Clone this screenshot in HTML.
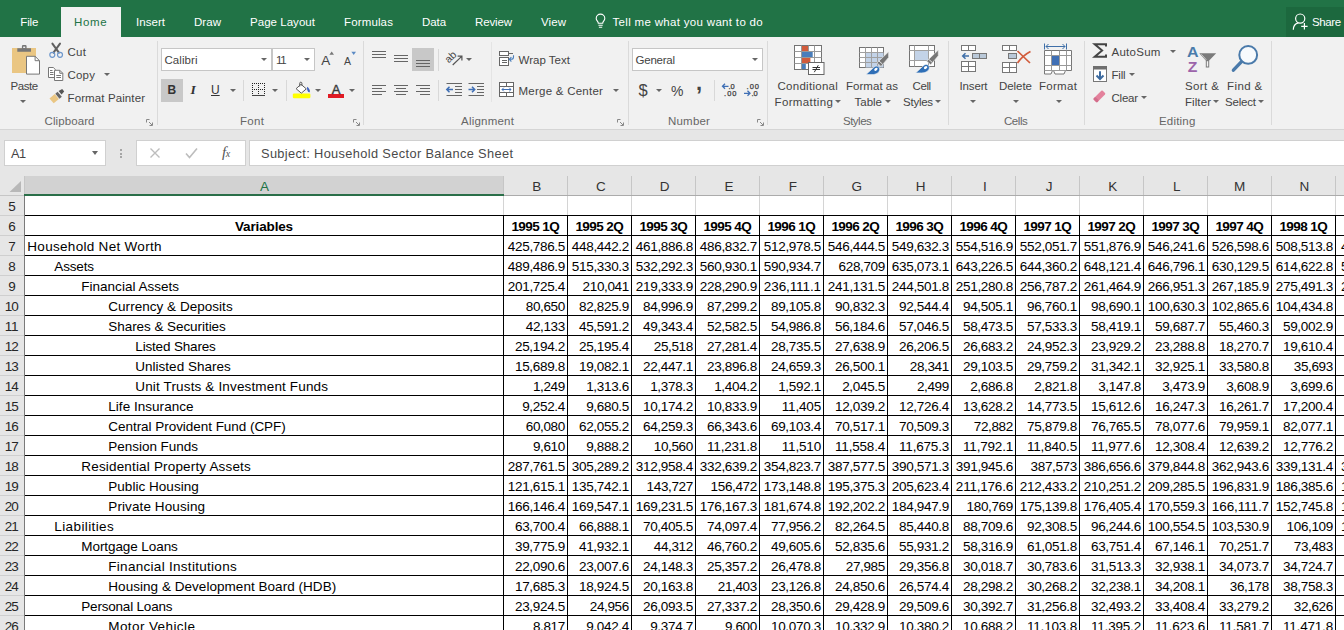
<!DOCTYPE html><html><head><meta charset="utf-8"><title>Household Sector Balance Sheet - Excel</title><style>
html,body{margin:0;padding:0;}
body{width:1344px;height:630px;overflow:hidden;background:#e6e6e6;position:relative;font-family:"Liberation Sans",sans-serif;}
.a{position:absolute;}
.t{position:absolute;white-space:pre;display:block;}
#top{left:0;top:0;width:1344px;height:37px;background:#217346;}
#hometab{left:61px;top:7px;width:60px;height:31px;background:#f1f1f1;}
#share{left:1286px;top:7px;width:58px;height:30px;background:#1c683e;}
#ribbon{left:0;top:37px;width:1344px;height:92px;background:#f1f1f1;border-bottom:1px solid #d5d5d5;}
.vs{position:absolute;width:1px;background:#dadada;}
.box{position:absolute;background:#fff;border:1px solid #c6c6c6;box-sizing:border-box;}
.sel{position:absolute;background:#c8c8c8;}
svg{position:absolute;overflow:visible;}
.dd{position:absolute;width:0;height:0;border-left:3px solid transparent;border-right:3px solid transparent;border-top:3.5px solid #666;}

</style></head><body>
<div class="a" id="top"></div><div class="a" id="hometab"></div><div class="a" id="share"></div><div class="a" id="ribbon"></div>
<div class="vs" style="left:157px;top:41px;height:84px"></div>
<div class="vs" style="left:363px;top:41px;height:84px"></div>
<div class="vs" style="left:628px;top:41px;height:84px"></div>
<div class="vs" style="left:767px;top:41px;height:84px"></div>
<div class="vs" style="left:948px;top:41px;height:84px"></div>
<div class="vs" style="left:1084px;top:41px;height:84px"></div>
<div class="vs" style="left:1271px;top:41px;height:84px"></div>
<div class="vs" style="left:491px;top:42px;height:60px;background:#e4e4e4"></div>
<div class="vs" style="left:438px;top:49px;height:22px;background:#d8d8d8"></div>
<div class="vs" style="left:438px;top:80px;height:21px;background:#d8d8d8"></div>
<div class="vs" style="left:243px;top:80px;height:21px;background:#d8d8d8"></div>
<div class="vs" style="left:286px;top:80px;height:21px;background:#d8d8d8"></div>
<div class="vs" style="left:714px;top:80px;height:21px;background:#d8d8d8"></div>
<div class="box" style="left:161px;top:48px;width:111px;height:23px"></div>
<div class="box" style="left:272px;top:48px;width:43px;height:23px"></div>
<div class="box" style="left:632px;top:48px;width:131px;height:23px"></div>
<div class="sel" style="left:161px;top:79px;width:22px;height:23px"></div>
<div class="sel" style="left:412px;top:48px;width:22px;height:23px"></div>
<svg style="left:145.5px;top:118.5px" width="7" height="7" viewBox="0 0 7 7"><path d="M0.5 3.5V0.5H3.5M3 3L6 6M6.500 3.500V6.500H3.500" fill="none" stroke="#888" stroke-width="1"/></svg>
<svg style="left:352.5px;top:118.5px" width="7" height="7" viewBox="0 0 7 7"><path d="M0.5 3.5V0.5H3.5M3 3L6 6M6.500 3.500V6.500H3.500" fill="none" stroke="#888" stroke-width="1"/></svg>
<svg style="left:616.5px;top:118.5px" width="7" height="7" viewBox="0 0 7 7"><path d="M0.5 3.5V0.5H3.5M3 3L6 6M6.500 3.500V6.500H3.500" fill="none" stroke="#888" stroke-width="1"/></svg>
<svg style="left:756.5px;top:118.5px" width="7" height="7" viewBox="0 0 7 7"><path d="M0.5 3.5V0.5H3.5M3 3L6 6M6.500 3.500V6.500H3.500" fill="none" stroke="#888" stroke-width="1"/></svg>
<div class="box" style="left:4px;top:140px;width:102px;height:26px;border-color:#d0d0d0"></div>
<div class="box" style="left:136px;top:140px;width:110px;height:26px;border-color:#d0d0d0"></div>
<div class="box" style="left:249px;top:140px;width:1100px;height:26px;border-color:#d0d0d0"></div>
<div class="dd" style="left:20px;top:99.5px"></div>
<div class="dd" style="left:104px;top:72.5px"></div>
<div class="dd" style="left:261px;top:58.0px"></div>
<div class="dd" style="left:304px;top:58.0px"></div>
<div class="dd" style="left:229.5px;top:89.0px"></div>
<div class="dd" style="left:272px;top:89.0px"></div>
<div class="dd" style="left:315px;top:89.0px"></div>
<div class="dd" style="left:349px;top:89.0px"></div>
<div class="dd" style="left:465.5px;top:58.0px"></div>
<div class="dd" style="left:612.5px;top:89.0px"></div>
<div class="dd" style="left:752px;top:58.0px"></div>
<div class="dd" style="left:656px;top:89.0px"></div>
<div class="dd" style="left:835px;top:100.0px"></div>
<div class="dd" style="left:884.5px;top:100.0px"></div>
<div class="dd" style="left:935px;top:100.0px"></div>
<div class="dd" style="left:970px;top:100.0px"></div>
<div class="dd" style="left:1012.5px;top:100.0px"></div>
<div class="dd" style="left:1055.5px;top:100.0px"></div>
<div class="dd" style="left:1170px;top:50.0px"></div>
<div class="dd" style="left:1129px;top:73.0px"></div>
<div class="dd" style="left:1140.5px;top:96.0px"></div>
<div class="dd" style="left:1213px;top:100.0px"></div>
<div class="dd" style="left:1258px;top:100.0px"></div>
<div class="dd" style="left:92px;top:151px;border-left-width:3.5px;border-right-width:3.5px;border-top-width:4px"></div>
<div class="a" style="left:120px;top:149px;width:2px;height:2px;background:#a6a6a6"></div>
<div class="a" style="left:120px;top:152.5px;width:2px;height:2px;background:#a6a6a6"></div>
<div class="a" style="left:120px;top:156px;width:2px;height:2px;background:#a6a6a6"></div>
<svg style="left:149px;top:147px" width="12" height="12" viewBox="0 0 12 12"><path d="M1.5 1.5L10.5 10.5M10.5 1.5L1.5 10.5" stroke="#bdbdbd" stroke-width="1.4" fill="none"/></svg>
<svg style="left:185px;top:147px" width="13" height="12" viewBox="0 0 13 12"><path d="M1 6.5L4.5 10.5L12 1.5" stroke="#bdbdbd" stroke-width="1.6" fill="none"/></svg>
<span class="t" style="left:222px;top:145px;font-family:'Liberation Serif',serif;font-style:italic;font-size:15px;line-height:15px;color:#555;letter-spacing:-0.5px">f<span style="font-size:10px">x</span></span>
<div class="a" style="left:0;top:196px;width:1344px;height:434px;background:#fff"></div>
<div class="a" style="left:0;top:176px;width:1344px;height:20px;background:#e6e6e6"></div>
<div class="a" style="left:0;top:196px;width:24px;height:434px;background:#e6e6e6"></div>
<div class="a" style="left:25px;top:176px;width:479px;height:18px;background:#d2d2d2"></div>
<svg style="left:0;top:0" width="1344" height="630" viewBox="0 0 1344 630" shape-rendering="crispEdges"><path d="M21 181V192H9.5Z" fill="#b8b8b8" shape-rendering="auto"/><path d="M504 195.5H1344" stroke="#ababab" stroke-width="1"/><path d="M0 195.5H24" stroke="#c6c6c6" stroke-width="1"/><path d="M503.5 176V195M567.5 176V195M631.5 176V195M695.5 176V195M759.5 176V195M823.5 176V195M887.5 176V195M951.5 176V195M1015.5 176V195M1079.5 176V195M1143.5 176V195M1207.5 176V195M1271.5 176V195M1335.5 176V195M1399.5 176V195M24.5 176V195" stroke="#c6c6c6" stroke-width="1"/><path d="M0 215.5H24M0 235.5H24M0 255.5H24M0 275.5H24M0 295.5H24M0 315.5H24M0 335.5H24M0 355.5H24M0 375.5H24M0 395.5H24M0 415.5H24M0 435.5H24M0 455.5H24M0 475.5H24M0 495.5H24M0 515.5H24M0 535.5H24M0 555.5H24M0 575.5H24M0 595.5H24M0 615.5H24" stroke="#cfcfcf" stroke-width="1"/><path d="M503.5 196V215M567.5 196V215M631.5 196V215M695.5 196V215M759.5 196V215M823.5 196V215M887.5 196V215M951.5 196V215M1015.5 196V215M1079.5 196V215M1143.5 196V215M1207.5 196V215M1271.5 196V215M1335.5 196V215M1399.5 196V215" stroke="#d4d4d4" stroke-width="1"/><path d="M24 195H504" stroke="#2a6f49" stroke-width="2"/><path d="M25 215.5H1344M25 235.5H1344M25 255.5H1344M25 275.5H1344M25 295.5H1344M25 315.5H1344M25 335.5H1344M25 355.5H1344M25 375.5H1344M25 395.5H1344M25 415.5H1344M25 435.5H1344M25 455.5H1344M25 475.5H1344M25 495.5H1344M25 515.5H1344M25 535.5H1344M25 555.5H1344M25 575.5H1344M25 595.5H1344M25 615.5H1344M503.5 215V630M567.5 215V630M631.5 215V630M695.5 215V630M759.5 215V630M823.5 215V630M887.5 215V630M951.5 215V630M1015.5 215V630M1079.5 215V630M1143.5 215V630M1207.5 215V630M1271.5 215V630M1335.5 215V630" stroke="#000" stroke-width="1"/><path d="M24.5 196V630" stroke="#7a7a7a" stroke-width="1"/></svg>
<svg style="left:0;top:0" width="1344" height="176" viewBox="0 0 1344 176" fill="none">
<!-- bulb -->
<g stroke="#fff" stroke-width="1.1" fill="none">
<path d="M598.3 23.2C598.3 21.6 596.2 20.6 596.2 18.4a4.3 4.3 0 0 1 8.6 0c0 2.2-2.1 3.2-2.1 4.8Z"/>
<path d="M598.4 25.2h4.3M598.9 27.3h3.3"/>
</g>
<!-- share icon -->
<g stroke="#fff" stroke-width="1.2" fill="none">
<circle cx="1300.2" cy="18.6" r="4.6"/>
<path d="M1293.3 29.8c0-4 2.2-6.3 5-7"/>
<path d="M1301.2 26.3h6.4M1304.4 23.1v6.4"/>
</g>
<!-- PASTE -->
<g>
<rect x="12" y="48" width="24" height="25" fill="#eac683"/>
<path d="M17.3 51.7V48.2h4.6V46.3a1.2 1.2 0 0 1 1.2-1.2h2.3a1.2 1.2 0 0 1 1.2 1.2v1.9H31v3.5Z" fill="#777"/>
<rect x="23.2" y="46.6" width="2" height="1.4" fill="#f1f1f1"/>
<path d="M26.5 56.3h8.6l4.4 4.4v13.4H26.5Z" fill="#fff" stroke="#777" stroke-width="1"/>
<path d="M35.1 56.3v4.4h4.4" stroke="#777" stroke-width="1" fill="none"/>
</g>
<!-- CUT -->
<g>
<path d="M52.4 43.6L58.9 52.6M60 43.6L53.5 52.6" stroke="#606060" stroke-width="2" stroke-linecap="round"/>
<circle cx="52.3" cy="54.8" r="2.5" stroke="#6d97cc" stroke-width="1.2"/>
<circle cx="60" cy="54.8" r="2.5" stroke="#6d97cc" stroke-width="1.2"/>
</g>
<!-- COPY -->
<g stroke="#777" stroke-width="1" fill="#fff">
<path d="M48.5 67.5h4.8l2.2 2.2v7.8h-7Z"/>
<path d="M50 70.5h2.5M50 72.5h3.5M50 74.5h3.5" />
<path d="M54.5 70.3h5.3l3 3v7.2h-8.3Z"/>
<path d="M59.8 70.3v3h3" fill="none"/>
<path d="M56.3 75.5h4.7M56.3 77.5h4.7" />
</g>
<!-- FORMAT PAINTER -->
<g>
<path d="M49.5 98.5l5.2-4.4 4.2 5-5.2 4.2Z" fill="#eac683"/>
<path d="M55.3 93.8l2.3-2 4.2 5-2.3 1.9Z" fill="#666"/>
<path d="M58.6 91l3.6-2 2 2.4-2.7 3.1Z" fill="#555"/>
</g>
<!-- grow/shrink font triangles -->
<path d="M329.4 54.8l2.3-3.2 2.3 3.2Z" fill="#777"/>
<path d="M351.4 51.7h4.6l-2.3 3.2Z" fill="#5b8ac4"/>
<!-- BORDERS icon -->
<g stroke="#222" stroke-width="1" stroke-dasharray="1 1" shape-rendering="crispEdges">
<path d="M252 83.500h13M252 89.500h13M252.500 83v12M258.500 83v12M264.500 83v12"/>
</g>
<path d="M252 95.500h13" stroke="#444" stroke-width="1" shape-rendering="crispEdges"/>
<!-- FILL bucket -->
<g>
<rect x="292.800" y="93.600" width="17.600" height="4.700" fill="#ffff00" rx="1.200"/>
<path d="M301 84.300l5.300 4.600-5 4.300-5.200-4.500Z" fill="#fff" stroke="#5a5a5a" stroke-width="1"/>
<path d="M299.700 86.500v-3.200a1.100 1.100 0 0 1 2.200 0v2.400" stroke="#5a5a5a" stroke-width="1"/>
<path d="M307 86.800c2 1.300 3.300 3.400 2.800 5.500-1.800.400-3-1.800-2.800-5.500Z" fill="#3b5fc0"/>
</g>
<!-- FONT COLOR bar -->
<rect x="328" y="94" width="16" height="4" fill="#e01b24"/>
<!-- ALIGN icons -->
<g stroke="#666" stroke-width="1">
<path d="M372 51.500h14M372 54.500h14M372 57.500h14"/>
<path d="M394 55.500h14M394 58.500h14M394 61.500h14"/>
<path d="M416 60.500h14M416 63.500h14M416 66.500h14"/>
<path d="M372 85.500h14M372 88.500h10M372 91.500h14M372 94.500h10"/>
<path d="M394 85.500h14M396 88.500h10M394 91.500h14M396 94.500h10"/>
<path d="M416 85.500h14M420 88.500h10M416 91.500h14M420 94.500h10"/>
</g>
<!-- ORIENTATION -->
<g>
<path d="M452.700 65l9-8.600M457.600 56.200h4.300v4.300" stroke="#555" stroke-width="1.200"/>
<text x="0" y="0" transform="translate(448.800 63.500) rotate(-44)" font-family="Liberation Sans, sans-serif" font-size="10.500" fill="#444">ab</text>
</g>
<!-- INDENT icons -->
<g stroke="#666" stroke-width="1">
<path d="M446.500 83.500h15.500M455 86.500h7M455 89.500h7M455 92.500h7M446.500 95.500h15.500"/>
<path d="M468.500 83.500h15.500M477 86.500h7M477 89.500h7M477 92.500h7M468.500 95.500h15.500"/>
</g>
<g stroke="#3f6fb5" stroke-width="1.500">
<path d="M453 89.500h-6M449.500 86.800l-2.700 2.700 2.700 2.700"/>
<path d="M468.500 89.500h6M472 86.800l2.700 2.700-2.700 2.700"/>
</g>
<!-- WRAP TEXT -->
<g stroke="#666" stroke-width="1" shape-rendering="crispEdges">
<rect x="499.500" y="51.500" width="9" height="4" fill="#fff"/>
<path d="M508.500 53.500h4"/>
<rect x="499.500" y="57.500" width="9" height="8" fill="#fff"/>
<path d="M501.500 60.500h5M501.500 62.500h5"/>
</g>
<path d="M513.500 55.200v1.800c0 1.600-1 2.300-2.400 2.300h-1.800M511.400 57.100l-2.200 2.200 2.200 2.200" stroke="#4a7ebb" stroke-width="1.100"/>
<!-- MERGE -->
<g stroke="#666" stroke-width="1">
<rect x="499.500" y="82.500" width="14" height="14" fill="#fff"/>
<path d="M499.500 86.500h14M499.500 92.500h14M506.500 82.500v4M506.500 92.500v4"/>
</g>
<path d="M502 89.500h9M503.800 87.700l-1.800 1.800 1.800 1.800M509.200 87.700l1.800 1.800-1.800 1.800" stroke="#3f6fb5" stroke-width="1"/>
<!-- DECIMALS -->
<g font-family="Liberation Sans, sans-serif" font-size="7.500" fill="#3a3a3a" stroke="#3a3a3a" stroke-width="0.250">
<text x="728.500" y="88.600">.0</text>
<text x="724" y="95.600" textLength="12.500">.00</text>
<text x="746.500" y="88.600" textLength="12.500">.00</text>
<text x="751.500" y="95.600">.0</text>
</g>
<g stroke="#3f6fb5" stroke-width="1.300">
<path d="M728.500 86.300h-6M725 83.800l-2.500 2.500 2.500 2.500"/>
<path d="M744 93.300h6M747.500 90.800l2.500 2.500-2.500 2.500"/>
</g>
</svg>
<svg style="left:0;top:0" width="1344" height="176" viewBox="0 0 1344 176" fill="none">
<!-- CONDITIONAL FORMATTING -->
<g>
<rect x="794.500" y="45.500" width="27" height="24" fill="#fff" stroke="#747474"/>
<path d="M794.500 51.500h27M794.500 57.500h27M794.500 63.500h27M801.500 45.500v24M808.500 45.500v24M814.500 45.500v24" stroke="#999" stroke-width="1"/>
<rect x="802" y="46" width="6" height="5" fill="#d25c3c"/>
<rect x="802" y="52" width="10.700" height="5" fill="#4a7ebb"/>
<rect x="802" y="58" width="8.400" height="5" fill="#d25c3c"/>
<rect x="802" y="64" width="3.800" height="5" fill="#4a7ebb"/>
<rect x="808.500" y="62.500" width="15.500" height="12" fill="#fff" stroke="#666"/>
<path d="M812.500 67.500h7.500M812.500 69.500h7.500M818.300 65.200l-4 7" stroke="#333" stroke-width="1"/>
</g>
<!-- FORMAT AS TABLE -->
<g>
<rect x="859.500" y="47.500" width="24" height="20" fill="#fff" stroke="#747474"/>
<rect x="866" y="53" width="17.500" height="14.500" fill="#c3d3e8"/>
<path d="M859.500 52.500h24M859.500 57.500h24M859.500 62.500h24M865.500 47.500v20M871.500 47.500v20M877.500 47.500v20" stroke="#a0a0a0" stroke-width="1"/>
<g transform="translate(0 0)"><path d="M888.600 51.800v5.600l-7.600 9-4-3.500Z" fill="#767676" stroke="#f1f1f1" stroke-width="0.600"/>
<path d="M879 61l3.400 3" stroke="#f1f1f1" stroke-width="0.900"/>
<path d="M866 74.600l8.300-7.700c2-1.700 5.300-.500 5.300 2.400 0 3.300-3.600 5.300-7.600 5.300Z" fill="#2f6fb7" stroke="#f1f1f1" stroke-width="0.600"/>
<ellipse cx="875.900" cy="69.300" rx="1.900" ry="1.300" transform="rotate(-40 875.900 69.300)" fill="#fff"/></g>
</g>
<!-- CELL STYLES -->
<g>
<rect x="909.500" y="45.500" width="25" height="21" fill="#fff" stroke="#747474"/>
<path d="M909.500 50.500h25M909.500 60.500h25M914.500 45.500v21M928.500 45.500v21" stroke="#a0a0a0" stroke-width="1"/>
<rect x="915" y="51" width="13" height="9" fill="#c3d3e8"/>
<g transform="translate(49.700 -1.700)"><path d="M888.600 51.800v5.600l-7.600 9-4-3.500Z" fill="#767676" stroke="#f1f1f1" stroke-width="0.600"/>
<path d="M879 61l3.400 3" stroke="#f1f1f1" stroke-width="0.900"/>
<path d="M866 74.600l8.300-7.700c2-1.700 5.300-.500 5.300 2.400 0 3.300-3.600 5.300-7.600 5.300Z" fill="#2f6fb7" stroke="#f1f1f1" stroke-width="0.600"/>
<ellipse cx="875.900" cy="69.300" rx="1.900" ry="1.300" transform="rotate(-40 875.900 69.300)" fill="#fff"/></g>
</g>
<!-- INSERT -->
<g stroke="#777" stroke-width="1">
<rect x="961.500" y="45.500" width="14" height="5" fill="#fff"/><path d="M968.500 45.500v5"/>
<rect x="972.500" y="53.500" width="14" height="5" fill="#b9c8d8"/><path d="M979.500 53.500v5"/>
<rect x="961.500" y="61.500" width="14" height="10" fill="#fff"/><path d="M968.500 61.500v10M961.500 66.500h14"/>
</g>
<path d="M969 56h-6.500M965.500 53.300l-2.800 2.700 2.800 2.700" stroke="#3f6fa8" stroke-width="1.500"/>
<!-- DELETE -->
<g stroke="#777" stroke-width="1">
<rect x="1002.500" y="45.500" width="14" height="5" fill="#fff"/><path d="M1009.500 45.500v5"/>
<rect x="1008.500" y="53.500" width="8" height="5" fill="#b9c8d8"/>
<rect x="1002.500" y="62.500" width="14" height="10" fill="#fff"/><path d="M1009.500 62.500v10M1002.500 67.500h14"/>
</g>
<path d="M1017.500 51l12.500 12M1030.500 51.500c-5 2.500-9.500 6.500-13 11.500" stroke="#d25c3c" stroke-width="1.700"/>
<!-- FORMAT -->
<g>
<path d="M1044.500 43.500v6M1066.500 43.500v6M1046 46.500h19M1048.500 44l-2.500 2.500 2.500 2.500M1062.500 44l2.500 2.500-2.500 2.500" stroke="#3f6fa8" stroke-width="1"/>
<path d="M1044.500 50.500h27v20h-6l-1.500 3.500h-9l-1.500-3.500h-1l-1.500 3.500h-6.500Z" fill="#fff" stroke="#777"/>
<path d="M1044.500 55.500h27M1044.500 65.500h27M1044.500 70.500h21M1051.500 50.500v20M1059.500 50.500v20M1066.500 50.500v20" stroke="#999" stroke-width="1"/>
<rect x="1052" y="56" width="7" height="9" fill="#3f6fb5"/>
</g>
<!-- SIGMA -->
<path d="M1106 46.400v-2.200h-11.300l7.400 6.300-7.400 6.300H1106V54.600" stroke="#444" stroke-width="2" fill="none" stroke-linejoin="miter"/>
<!-- FILL -->
<g>
<rect x="1093.500" y="66.500" width="13" height="15" fill="#fff" stroke="#777"/>
<rect x="1093" y="66" width="14" height="3.500" fill="#6e6e6e"/>
<path d="M1100 71.300v7.500M1096.500 75.500l3.500 3.500 3.500-3.500" stroke="#3c6a9f" stroke-width="2" fill="none"/>
</g>
<!-- ERASER -->
<g transform="translate(1099.400 96.400) rotate(-45)"><rect x="-6.300" y="-2.600" width="12.600" height="5.200" rx="1" fill="#e3819c"/><rect x="-6.300" y="-2.600" width="3" height="5.200" rx="1" fill="#d36d8b"/></g>
<!-- SORT & FILTER -->
<g font-family="Liberation Sans, sans-serif" font-weight="700">
<text x="1186.900" y="57.300" font-size="15.500" fill="#4a7cab" textLength="11.600" lengthAdjust="spacingAndGlyphs">A</text>
<text x="1187.700" y="71.500" font-size="15" fill="#9c64aa" textLength="9.600" lengthAdjust="spacingAndGlyphs">Z</text>
</g>
<path d="M1199.300 53.200h16.900l-7 7.200v7.100h-3.400v-7.100Z" fill="#7b7b7b"/>
<path d="M1206.800 61.200v5.300h1.400v-5.300Z" fill="#f4f4f4"/>
<path d="M1201.300 54.300l5 5.500" stroke="#e0e0e0" stroke-width="0.800"/>
<!-- FIND -->
<g>
<circle cx="1248.200" cy="54.900" r="8.900" fill="#f7fafd" stroke="#4a7aaa" stroke-width="2"/>
<path d="M1241.300 61.900l-7.900 8.300" stroke="#4a7aaa" stroke-width="3.400" stroke-linecap="round"/>
</g>
</svg>

<div id="txt">
<span class="t" style="left:20.30px;top:17.27px;font-size:11.5px;line-height:11.5px;color:#fff;letter-spacing:-0.15px;">File</span>
<span class="t" style="left:74.00px;top:17.27px;font-size:11.5px;line-height:11.5px;color:#217346;letter-spacing:0.66px;">Home</span>
<span class="t" style="left:136.00px;top:17.27px;font-size:11.5px;line-height:11.5px;color:#fff;letter-spacing:0.04px;">Insert</span>
<span class="t" style="left:194.00px;top:17.27px;font-size:11.5px;line-height:11.5px;color:#fff;letter-spacing:0.04px;">Draw</span>
<span class="t" style="left:250.00px;top:17.27px;font-size:11.5px;line-height:11.5px;color:#fff;letter-spacing:0.04px;">Page Layout</span>
<span class="t" style="left:344.00px;top:17.27px;font-size:11.5px;line-height:11.5px;color:#fff;letter-spacing:0.14px;">Formulas</span>
<span class="t" style="left:422.00px;top:17.27px;font-size:11.5px;line-height:11.5px;color:#fff;letter-spacing:-0.08px;">Data</span>
<span class="t" style="left:475.00px;top:17.27px;font-size:11.5px;line-height:11.5px;color:#fff;letter-spacing:-0.13px;">Review</span>
<span class="t" style="left:541.00px;top:17.27px;font-size:11.5px;line-height:11.5px;color:#fff;letter-spacing:0.08px;">View</span>
<span class="t" style="left:612.50px;top:17.27px;font-size:11.5px;line-height:11.5px;color:#fff;letter-spacing:0.32px;">Tell me what you want to do</span>
<span class="t" style="left:1312.00px;top:17.27px;font-size:11.5px;line-height:11.5px;color:#fff;letter-spacing:-0.38px;">Share</span>
<span class="t" style="left:10.50px;top:81.27px;font-size:11.5px;line-height:11.5px;color:#444;letter-spacing:-0.43px;">Paste</span>
<span class="t" style="left:67.50px;top:46.77px;font-size:11.5px;line-height:11.5px;color:#444;letter-spacing:0.24px;">Cut</span>
<span class="t" style="left:67.50px;top:69.77px;font-size:11.5px;line-height:11.5px;color:#444;letter-spacing:0.18px;">Copy</span>
<span class="t" style="left:67.50px;top:92.77px;font-size:11.5px;line-height:11.5px;color:#444;letter-spacing:0.11px;">Format Painter</span>
<span class="t" style="left:44.50px;top:116.27px;font-size:11.5px;line-height:11.5px;color:#666;letter-spacing:0.09px;">Clipboard</span>
<span class="t" style="left:164.50px;top:55.27px;font-size:11.5px;line-height:11.5px;color:#444;letter-spacing:0.06px;">Calibri</span>
<span class="t" style="left:276.00px;top:55.27px;font-size:11.5px;line-height:11.5px;color:#444;letter-spacing:-1.20px;">11</span>
<span class="t" style="left:240.00px;top:116.27px;font-size:11.5px;line-height:11.5px;color:#666;letter-spacing:0.28px;">Font</span>
<span class="t" style="left:518.50px;top:55.27px;font-size:11.5px;line-height:11.5px;color:#444;letter-spacing:0.02px;">Wrap Text</span>
<span class="t" style="left:518.50px;top:86.27px;font-size:11.5px;line-height:11.5px;color:#444;letter-spacing:0.25px;">Merge &amp; Center</span>
<span class="t" style="left:461.00px;top:116.27px;font-size:11.5px;line-height:11.5px;color:#666;letter-spacing:0.22px;">Alignment</span>
<span class="t" style="left:635.50px;top:55.27px;font-size:11.5px;line-height:11.5px;color:#444;letter-spacing:-0.22px;">General</span>
<span class="t" style="left:668.00px;top:116.27px;font-size:11.5px;line-height:11.5px;color:#666;letter-spacing:0.20px;">Number</span>
<span class="t" style="left:777.50px;top:81.27px;font-size:11.5px;line-height:11.5px;color:#444;letter-spacing:0.28px;">Conditional</span>
<span class="t" style="left:774.50px;top:97.27px;font-size:11.5px;line-height:11.5px;color:#444;letter-spacing:0.37px;">Formatting</span>
<span class="t" style="left:846.00px;top:81.27px;font-size:11.5px;line-height:11.5px;color:#444;letter-spacing:0.03px;">Format as</span>
<span class="t" style="left:854.50px;top:97.27px;font-size:11.5px;line-height:11.5px;color:#444;">Table</span>
<span class="t" style="left:912.50px;top:81.27px;font-size:11.5px;line-height:11.5px;color:#444;letter-spacing:-0.38px;">Cell</span>
<span class="t" style="left:903.00px;top:97.27px;font-size:11.5px;line-height:11.5px;color:#444;letter-spacing:-0.24px;">Styles</span>
<span class="t" style="left:843.00px;top:116.27px;font-size:11.5px;line-height:11.5px;color:#666;letter-spacing:-0.51px;">Styles</span>
<span class="t" style="left:959.50px;top:81.27px;font-size:11.5px;line-height:11.5px;color:#444;letter-spacing:-0.14px;">Insert</span>
<span class="t" style="left:999.00px;top:81.27px;font-size:11.5px;line-height:11.5px;color:#444;letter-spacing:-0.05px;">Delete</span>
<span class="t" style="left:1039.00px;top:81.27px;font-size:11.5px;line-height:11.5px;color:#444;letter-spacing:0.29px;">Format</span>
<span class="t" style="left:1004.00px;top:116.27px;font-size:11.5px;line-height:11.5px;color:#666;letter-spacing:-0.46px;">Cells</span>
<span class="t" style="left:1111.50px;top:46.77px;font-size:11.5px;line-height:11.5px;color:#444;letter-spacing:0.26px;">AutoSum</span>
<span class="t" style="left:1111.50px;top:69.77px;font-size:11.5px;line-height:11.5px;color:#444;letter-spacing:-0.20px;">Fill</span>
<span class="t" style="left:1111.50px;top:92.77px;font-size:11.5px;line-height:11.5px;color:#444;letter-spacing:-0.22px;">Clear</span>
<span class="t" style="left:1185.00px;top:81.27px;font-size:11.5px;line-height:11.5px;color:#444;letter-spacing:0.37px;">Sort &amp;</span>
<span class="t" style="left:1185.00px;top:97.27px;font-size:11.5px;line-height:11.5px;color:#444;letter-spacing:0.08px;">Filter</span>
<span class="t" style="left:1227.00px;top:81.27px;font-size:11.5px;line-height:11.5px;color:#444;letter-spacing:0.41px;">Find &amp;</span>
<span class="t" style="left:1225.00px;top:97.27px;font-size:11.5px;line-height:11.5px;color:#444;letter-spacing:-0.18px;">Select</span>
<span class="t" style="left:1159.00px;top:116.27px;font-size:11.5px;line-height:11.5px;color:#666;letter-spacing:0.20px;">Editing</span>
<span class="t" style="left:167.50px;top:84.34px;font-size:12px;line-height:12px;color:#333;font-weight:700;">B</span>
<span class="t" style="left:190.50px;top:83.07px;font-size:13.5px;line-height:13.5px;color:#333;font-weight:700;font-style:italic;font-family:'Liberation Serif', serif;">I</span>
<span class="t" style="left:211.00px;top:83.84px;font-size:12px;line-height:12px;color:#333;text-decoration:underline;text-underline-offset:1px;">U</span>
<span class="t" style="left:638.50px;top:81.53px;font-size:16.5px;line-height:16.5px;color:#444;">$</span>
<span class="t" style="left:670.50px;top:82.58px;font-size:15.5px;line-height:15.5px;color:#444;transform:scaleX(0.9);transform-origin:0 0;">%</span>
<span class="t" style="left:696.00px;top:72.38px;font-size:22px;line-height:22px;color:#444;font-weight:700;">,</span>
<span class="t" style="left:321.30px;top:54.07px;font-size:13.5px;line-height:13.5px;color:#444;">A</span>
<span class="t" style="left:344.00px;top:56.41px;font-size:10.5px;line-height:10.5px;color:#444;">A</span>
<span class="t" style="left:331.80px;top:83.00px;font-size:13px;line-height:13px;color:#3a3a3a;-webkit-text-stroke:0.4px #3a3a3a;">A</span>
<span class="t" style="left:11.00px;top:147.66px;font-size:12.8px;line-height:12.8px;color:#444;letter-spacing:-0.44px;">A1</span>
<span class="t" style="left:261.00px;top:147.66px;font-size:12.8px;line-height:12.8px;color:#4a4a4a;letter-spacing:0.36px;">Subject: Household Sector Balance Sheet</span>
<span class="t" style="left:260.00px;top:180.07px;font-size:13.5px;line-height:13.5px;color:#217346;">A</span>
<span class="t" style="left:532.25px;top:180.07px;font-size:13.5px;line-height:13.5px;color:#333;">B</span>
<span class="t" style="left:596.00px;top:180.07px;font-size:13.5px;line-height:13.5px;color:#333;">C</span>
<span class="t" style="left:659.75px;top:180.07px;font-size:13.5px;line-height:13.5px;color:#333;">D</span>
<span class="t" style="left:724.50px;top:180.07px;font-size:13.5px;line-height:13.5px;color:#333;">E</span>
<span class="t" style="left:788.75px;top:180.07px;font-size:13.5px;line-height:13.5px;color:#333;">F</span>
<span class="t" style="left:851.50px;top:180.07px;font-size:13.5px;line-height:13.5px;color:#333;">G</span>
<span class="t" style="left:915.75px;top:180.07px;font-size:13.5px;line-height:13.5px;color:#333;">H</span>
<span class="t" style="left:983.00px;top:180.07px;font-size:13.5px;line-height:13.5px;color:#333;">I</span>
<span class="t" style="left:1045.75px;top:180.07px;font-size:13.5px;line-height:13.5px;color:#333;">J</span>
<span class="t" style="left:1108.25px;top:180.07px;font-size:13.5px;line-height:13.5px;color:#333;">K</span>
<span class="t" style="left:1173.00px;top:180.07px;font-size:13.5px;line-height:13.5px;color:#333;">L</span>
<span class="t" style="left:1234.00px;top:180.07px;font-size:13.5px;line-height:13.5px;color:#333;">M</span>
<span class="t" style="left:1299.50px;top:180.07px;font-size:13.5px;line-height:13.5px;color:#333;">N</span>
<span class="t" style="left:8.35px;top:200.37px;font-size:13.5px;line-height:13.5px;color:#262626;">5</span>
<span class="t" style="left:8.35px;top:220.37px;font-size:13.5px;line-height:13.5px;color:#262626;">6</span>
<span class="t" style="left:235.00px;top:220.37px;font-size:13.5px;line-height:13.5px;color:#000;font-weight:700;letter-spacing:-0.15px;">Variables</span>
<span class="t" style="left:511.40px;top:220.37px;font-size:13.5px;line-height:13.5px;color:#000;font-weight:700;letter-spacing:-0.58px;">1995 1Q</span>
<span class="t" style="left:575.40px;top:220.37px;font-size:13.5px;line-height:13.5px;color:#000;font-weight:700;letter-spacing:-0.58px;">1995 2Q</span>
<span class="t" style="left:639.40px;top:220.37px;font-size:13.5px;line-height:13.5px;color:#000;font-weight:700;letter-spacing:-0.58px;">1995 3Q</span>
<span class="t" style="left:703.40px;top:220.37px;font-size:13.5px;line-height:13.5px;color:#000;font-weight:700;letter-spacing:-0.58px;">1995 4Q</span>
<span class="t" style="left:767.40px;top:220.37px;font-size:13.5px;line-height:13.5px;color:#000;font-weight:700;letter-spacing:-0.58px;">1996 1Q</span>
<span class="t" style="left:831.40px;top:220.37px;font-size:13.5px;line-height:13.5px;color:#000;font-weight:700;letter-spacing:-0.58px;">1996 2Q</span>
<span class="t" style="left:895.40px;top:220.37px;font-size:13.5px;line-height:13.5px;color:#000;font-weight:700;letter-spacing:-0.58px;">1996 3Q</span>
<span class="t" style="left:959.40px;top:220.37px;font-size:13.5px;line-height:13.5px;color:#000;font-weight:700;letter-spacing:-0.58px;">1996 4Q</span>
<span class="t" style="left:1023.40px;top:220.37px;font-size:13.5px;line-height:13.5px;color:#000;font-weight:700;letter-spacing:-0.58px;">1997 1Q</span>
<span class="t" style="left:1087.40px;top:220.37px;font-size:13.5px;line-height:13.5px;color:#000;font-weight:700;letter-spacing:-0.58px;">1997 2Q</span>
<span class="t" style="left:1151.40px;top:220.37px;font-size:13.5px;line-height:13.5px;color:#000;font-weight:700;letter-spacing:-0.58px;">1997 3Q</span>
<span class="t" style="left:1215.40px;top:220.37px;font-size:13.5px;line-height:13.5px;color:#000;font-weight:700;letter-spacing:-0.58px;">1997 4Q</span>
<span class="t" style="left:1279.40px;top:220.37px;font-size:13.5px;line-height:13.5px;color:#000;font-weight:700;letter-spacing:-0.58px;">1998 1Q</span>
<span class="t" style="left:8.35px;top:240.37px;font-size:13.5px;line-height:13.5px;color:#262626;">7</span>
<span class="t" style="left:27.30px;top:240.37px;font-size:13.5px;line-height:13.5px;color:#000;letter-spacing:0.30px;">Household Net Worth</span>
<span class="t" style="left:507.85px;top:240.37px;font-size:13.5px;line-height:13.5px;color:#000;letter-spacing:-0.33px;">425,786.5</span>
<span class="t" style="left:571.85px;top:240.37px;font-size:13.5px;line-height:13.5px;color:#000;letter-spacing:-0.33px;">448,442.2</span>
<span class="t" style="left:635.85px;top:240.37px;font-size:13.5px;line-height:13.5px;color:#000;letter-spacing:-0.33px;">461,886.8</span>
<span class="t" style="left:699.85px;top:240.37px;font-size:13.5px;line-height:13.5px;color:#000;letter-spacing:-0.33px;">486,832.7</span>
<span class="t" style="left:763.85px;top:240.37px;font-size:13.5px;line-height:13.5px;color:#000;letter-spacing:-0.33px;">512,978.5</span>
<span class="t" style="left:827.85px;top:240.37px;font-size:13.5px;line-height:13.5px;color:#000;letter-spacing:-0.33px;">546,444.5</span>
<span class="t" style="left:891.85px;top:240.37px;font-size:13.5px;line-height:13.5px;color:#000;letter-spacing:-0.33px;">549,632.3</span>
<span class="t" style="left:955.85px;top:240.37px;font-size:13.5px;line-height:13.5px;color:#000;letter-spacing:-0.33px;">554,516.9</span>
<span class="t" style="left:1019.85px;top:240.37px;font-size:13.5px;line-height:13.5px;color:#000;letter-spacing:-0.33px;">552,051.7</span>
<span class="t" style="left:1083.85px;top:240.37px;font-size:13.5px;line-height:13.5px;color:#000;letter-spacing:-0.33px;">551,876.9</span>
<span class="t" style="left:1147.85px;top:240.37px;font-size:13.5px;line-height:13.5px;color:#000;letter-spacing:-0.33px;">546,241.6</span>
<span class="t" style="left:1211.85px;top:240.37px;font-size:13.5px;line-height:13.5px;color:#000;letter-spacing:-0.33px;">526,598.6</span>
<span class="t" style="left:1275.85px;top:240.37px;font-size:13.5px;line-height:13.5px;color:#000;letter-spacing:-0.33px;">508,513.8</span>
<span class="t" style="left:1341.00px;top:240.37px;font-size:13.5px;line-height:13.5px;color:#000;">4</span>
<span class="t" style="left:8.35px;top:260.37px;font-size:13.5px;line-height:13.5px;color:#262626;">8</span>
<span class="t" style="left:54.30px;top:260.37px;font-size:13.5px;line-height:13.5px;color:#000;letter-spacing:-0.15px;">Assets</span>
<span class="t" style="left:507.85px;top:260.37px;font-size:13.5px;line-height:13.5px;color:#000;letter-spacing:-0.33px;">489,486.9</span>
<span class="t" style="left:571.85px;top:260.37px;font-size:13.5px;line-height:13.5px;color:#000;letter-spacing:-0.33px;">515,330.3</span>
<span class="t" style="left:635.85px;top:260.37px;font-size:13.5px;line-height:13.5px;color:#000;letter-spacing:-0.33px;">532,292.3</span>
<span class="t" style="left:699.85px;top:260.37px;font-size:13.5px;line-height:13.5px;color:#000;letter-spacing:-0.33px;">560,930.1</span>
<span class="t" style="left:763.85px;top:260.37px;font-size:13.5px;line-height:13.5px;color:#000;letter-spacing:-0.33px;">590,934.7</span>
<span class="t" style="left:838.60px;top:260.37px;font-size:13.5px;line-height:13.5px;color:#000;letter-spacing:-0.36px;">628,709</span>
<span class="t" style="left:891.85px;top:260.37px;font-size:13.5px;line-height:13.5px;color:#000;letter-spacing:-0.33px;">635,073.1</span>
<span class="t" style="left:955.85px;top:260.37px;font-size:13.5px;line-height:13.5px;color:#000;letter-spacing:-0.33px;">643,226.5</span>
<span class="t" style="left:1019.85px;top:260.37px;font-size:13.5px;line-height:13.5px;color:#000;letter-spacing:-0.33px;">644,360.2</span>
<span class="t" style="left:1083.85px;top:260.37px;font-size:13.5px;line-height:13.5px;color:#000;letter-spacing:-0.33px;">648,121.4</span>
<span class="t" style="left:1147.85px;top:260.37px;font-size:13.5px;line-height:13.5px;color:#000;letter-spacing:-0.33px;">646,796.1</span>
<span class="t" style="left:1211.85px;top:260.37px;font-size:13.5px;line-height:13.5px;color:#000;letter-spacing:-0.33px;">630,129.5</span>
<span class="t" style="left:1275.85px;top:260.37px;font-size:13.5px;line-height:13.5px;color:#000;letter-spacing:-0.33px;">614,622.8</span>
<span class="t" style="left:1341.00px;top:260.37px;font-size:13.5px;line-height:13.5px;color:#000;">5</span>
<span class="t" style="left:8.35px;top:280.37px;font-size:13.5px;line-height:13.5px;color:#262626;">9</span>
<span class="t" style="left:81.30px;top:280.37px;font-size:13.5px;line-height:13.5px;color:#000;letter-spacing:0.01px;">Financial Assets</span>
<span class="t" style="left:507.85px;top:280.37px;font-size:13.5px;line-height:13.5px;color:#000;letter-spacing:-0.33px;">201,725.4</span>
<span class="t" style="left:582.60px;top:280.37px;font-size:13.5px;line-height:13.5px;color:#000;letter-spacing:-0.36px;">210,041</span>
<span class="t" style="left:635.85px;top:280.37px;font-size:13.5px;line-height:13.5px;color:#000;letter-spacing:-0.33px;">219,333.9</span>
<span class="t" style="left:699.85px;top:280.37px;font-size:13.5px;line-height:13.5px;color:#000;letter-spacing:-0.33px;">228,290.9</span>
<span class="t" style="left:763.85px;top:280.37px;font-size:13.5px;line-height:13.5px;color:#000;letter-spacing:-0.10px;">236,111.1</span>
<span class="t" style="left:827.85px;top:280.37px;font-size:13.5px;line-height:13.5px;color:#000;letter-spacing:-0.33px;">241,131.5</span>
<span class="t" style="left:891.85px;top:280.37px;font-size:13.5px;line-height:13.5px;color:#000;letter-spacing:-0.33px;">244,501.8</span>
<span class="t" style="left:955.85px;top:280.37px;font-size:13.5px;line-height:13.5px;color:#000;letter-spacing:-0.33px;">251,280.8</span>
<span class="t" style="left:1019.85px;top:280.37px;font-size:13.5px;line-height:13.5px;color:#000;letter-spacing:-0.33px;">256,787.2</span>
<span class="t" style="left:1083.85px;top:280.37px;font-size:13.5px;line-height:13.5px;color:#000;letter-spacing:-0.33px;">261,464.9</span>
<span class="t" style="left:1147.85px;top:280.37px;font-size:13.5px;line-height:13.5px;color:#000;letter-spacing:-0.33px;">266,951.3</span>
<span class="t" style="left:1211.85px;top:280.37px;font-size:13.5px;line-height:13.5px;color:#000;letter-spacing:-0.33px;">267,185.9</span>
<span class="t" style="left:1275.85px;top:280.37px;font-size:13.5px;line-height:13.5px;color:#000;letter-spacing:-0.33px;">275,491.3</span>
<span class="t" style="left:1341.00px;top:280.37px;font-size:13.5px;line-height:13.5px;color:#000;">2</span>
<span class="t" style="left:4.85px;top:300.37px;font-size:13.5px;line-height:13.5px;color:#262626;letter-spacing:-1.02px;">10</span>
<span class="t" style="left:108.30px;top:300.37px;font-size:13.5px;line-height:13.5px;color:#000;letter-spacing:0.03px;">Currency &amp; Deposits</span>
<span class="t" style="left:525.75px;top:300.37px;font-size:13.5px;line-height:13.5px;color:#000;letter-spacing:-0.35px;">80,650</span>
<span class="t" style="left:579.00px;top:300.37px;font-size:13.5px;line-height:13.5px;color:#000;letter-spacing:-0.33px;">82,825.9</span>
<span class="t" style="left:643.00px;top:300.37px;font-size:13.5px;line-height:13.5px;color:#000;letter-spacing:-0.33px;">84,996.9</span>
<span class="t" style="left:707.00px;top:300.37px;font-size:13.5px;line-height:13.5px;color:#000;letter-spacing:-0.33px;">87,299.2</span>
<span class="t" style="left:771.00px;top:300.37px;font-size:13.5px;line-height:13.5px;color:#000;letter-spacing:-0.33px;">89,105.8</span>
<span class="t" style="left:835.00px;top:300.37px;font-size:13.5px;line-height:13.5px;color:#000;letter-spacing:-0.33px;">90,832.3</span>
<span class="t" style="left:899.00px;top:300.37px;font-size:13.5px;line-height:13.5px;color:#000;letter-spacing:-0.33px;">92,544.4</span>
<span class="t" style="left:963.00px;top:300.37px;font-size:13.5px;line-height:13.5px;color:#000;letter-spacing:-0.33px;">94,505.1</span>
<span class="t" style="left:1027.00px;top:300.37px;font-size:13.5px;line-height:13.5px;color:#000;letter-spacing:-0.33px;">96,760.1</span>
<span class="t" style="left:1091.00px;top:300.37px;font-size:13.5px;line-height:13.5px;color:#000;letter-spacing:-0.33px;">98,690.1</span>
<span class="t" style="left:1147.85px;top:300.37px;font-size:13.5px;line-height:13.5px;color:#000;letter-spacing:-0.33px;">100,630.3</span>
<span class="t" style="left:1211.85px;top:300.37px;font-size:13.5px;line-height:13.5px;color:#000;letter-spacing:-0.33px;">102,865.6</span>
<span class="t" style="left:1275.85px;top:300.37px;font-size:13.5px;line-height:13.5px;color:#000;letter-spacing:-0.33px;">104,434.8</span>
<span class="t" style="left:4.85px;top:320.37px;font-size:13.5px;line-height:13.5px;color:#262626;letter-spacing:-0.34px;">11</span>
<span class="t" style="left:108.30px;top:320.37px;font-size:13.5px;line-height:13.5px;color:#000;letter-spacing:-0.06px;">Shares &amp; Securities</span>
<span class="t" style="left:525.75px;top:320.37px;font-size:13.5px;line-height:13.5px;color:#000;letter-spacing:-0.35px;">42,133</span>
<span class="t" style="left:579.00px;top:320.37px;font-size:13.5px;line-height:13.5px;color:#000;letter-spacing:-0.33px;">45,591.2</span>
<span class="t" style="left:643.00px;top:320.37px;font-size:13.5px;line-height:13.5px;color:#000;letter-spacing:-0.33px;">49,343.4</span>
<span class="t" style="left:707.00px;top:320.37px;font-size:13.5px;line-height:13.5px;color:#000;letter-spacing:-0.33px;">52,582.5</span>
<span class="t" style="left:771.00px;top:320.37px;font-size:13.5px;line-height:13.5px;color:#000;letter-spacing:-0.33px;">54,986.8</span>
<span class="t" style="left:835.00px;top:320.37px;font-size:13.5px;line-height:13.5px;color:#000;letter-spacing:-0.33px;">56,184.6</span>
<span class="t" style="left:899.00px;top:320.37px;font-size:13.5px;line-height:13.5px;color:#000;letter-spacing:-0.33px;">57,046.5</span>
<span class="t" style="left:963.00px;top:320.37px;font-size:13.5px;line-height:13.5px;color:#000;letter-spacing:-0.33px;">58,473.5</span>
<span class="t" style="left:1027.00px;top:320.37px;font-size:13.5px;line-height:13.5px;color:#000;letter-spacing:-0.33px;">57,533.3</span>
<span class="t" style="left:1091.00px;top:320.37px;font-size:13.5px;line-height:13.5px;color:#000;letter-spacing:-0.33px;">58,419.1</span>
<span class="t" style="left:1155.00px;top:320.37px;font-size:13.5px;line-height:13.5px;color:#000;letter-spacing:-0.33px;">59,687.7</span>
<span class="t" style="left:1219.00px;top:320.37px;font-size:13.5px;line-height:13.5px;color:#000;letter-spacing:-0.33px;">55,460.3</span>
<span class="t" style="left:1283.00px;top:320.37px;font-size:13.5px;line-height:13.5px;color:#000;letter-spacing:-0.33px;">59,002.9</span>
<span class="t" style="left:4.85px;top:340.37px;font-size:13.5px;line-height:13.5px;color:#262626;letter-spacing:-1.02px;">12</span>
<span class="t" style="left:135.30px;top:340.37px;font-size:13.5px;line-height:13.5px;color:#000;letter-spacing:-0.17px;">Listed Shares</span>
<span class="t" style="left:515.00px;top:340.37px;font-size:13.5px;line-height:13.5px;color:#000;letter-spacing:-0.33px;">25,194.2</span>
<span class="t" style="left:579.00px;top:340.37px;font-size:13.5px;line-height:13.5px;color:#000;letter-spacing:-0.33px;">25,195.4</span>
<span class="t" style="left:653.75px;top:340.37px;font-size:13.5px;line-height:13.5px;color:#000;letter-spacing:-0.35px;">25,518</span>
<span class="t" style="left:707.00px;top:340.37px;font-size:13.5px;line-height:13.5px;color:#000;letter-spacing:-0.33px;">27,281.4</span>
<span class="t" style="left:771.00px;top:340.37px;font-size:13.5px;line-height:13.5px;color:#000;letter-spacing:-0.33px;">28,735.5</span>
<span class="t" style="left:835.00px;top:340.37px;font-size:13.5px;line-height:13.5px;color:#000;letter-spacing:-0.33px;">27,638.9</span>
<span class="t" style="left:899.00px;top:340.37px;font-size:13.5px;line-height:13.5px;color:#000;letter-spacing:-0.33px;">26,206.5</span>
<span class="t" style="left:963.00px;top:340.37px;font-size:13.5px;line-height:13.5px;color:#000;letter-spacing:-0.33px;">26,683.2</span>
<span class="t" style="left:1027.00px;top:340.37px;font-size:13.5px;line-height:13.5px;color:#000;letter-spacing:-0.33px;">24,952.3</span>
<span class="t" style="left:1091.00px;top:340.37px;font-size:13.5px;line-height:13.5px;color:#000;letter-spacing:-0.33px;">23,929.2</span>
<span class="t" style="left:1155.00px;top:340.37px;font-size:13.5px;line-height:13.5px;color:#000;letter-spacing:-0.33px;">23,288.8</span>
<span class="t" style="left:1219.00px;top:340.37px;font-size:13.5px;line-height:13.5px;color:#000;letter-spacing:-0.33px;">18,270.7</span>
<span class="t" style="left:1283.00px;top:340.37px;font-size:13.5px;line-height:13.5px;color:#000;letter-spacing:-0.33px;">19,610.4</span>
<span class="t" style="left:4.85px;top:360.37px;font-size:13.5px;line-height:13.5px;color:#262626;letter-spacing:-1.02px;">13</span>
<span class="t" style="left:135.30px;top:360.37px;font-size:13.5px;line-height:13.5px;color:#000;letter-spacing:0.01px;">Unlisted Shares</span>
<span class="t" style="left:515.00px;top:360.37px;font-size:13.5px;line-height:13.5px;color:#000;letter-spacing:-0.33px;">15,689.8</span>
<span class="t" style="left:579.00px;top:360.37px;font-size:13.5px;line-height:13.5px;color:#000;letter-spacing:-0.33px;">19,082.1</span>
<span class="t" style="left:643.00px;top:360.37px;font-size:13.5px;line-height:13.5px;color:#000;letter-spacing:-0.33px;">22,447.1</span>
<span class="t" style="left:707.00px;top:360.37px;font-size:13.5px;line-height:13.5px;color:#000;letter-spacing:-0.33px;">23,896.8</span>
<span class="t" style="left:771.00px;top:360.37px;font-size:13.5px;line-height:13.5px;color:#000;letter-spacing:-0.33px;">24,659.3</span>
<span class="t" style="left:835.00px;top:360.37px;font-size:13.5px;line-height:13.5px;color:#000;letter-spacing:-0.33px;">26,500.1</span>
<span class="t" style="left:909.75px;top:360.37px;font-size:13.5px;line-height:13.5px;color:#000;letter-spacing:-0.35px;">28,341</span>
<span class="t" style="left:963.00px;top:360.37px;font-size:13.5px;line-height:13.5px;color:#000;letter-spacing:-0.33px;">29,103.5</span>
<span class="t" style="left:1027.00px;top:360.37px;font-size:13.5px;line-height:13.5px;color:#000;letter-spacing:-0.33px;">29,759.2</span>
<span class="t" style="left:1091.00px;top:360.37px;font-size:13.5px;line-height:13.5px;color:#000;letter-spacing:-0.33px;">31,342.1</span>
<span class="t" style="left:1155.00px;top:360.37px;font-size:13.5px;line-height:13.5px;color:#000;letter-spacing:-0.33px;">32,925.1</span>
<span class="t" style="left:1219.00px;top:360.37px;font-size:13.5px;line-height:13.5px;color:#000;letter-spacing:-0.33px;">33,580.8</span>
<span class="t" style="left:1293.75px;top:360.37px;font-size:13.5px;line-height:13.5px;color:#000;letter-spacing:-0.35px;">35,693</span>
<span class="t" style="left:4.85px;top:380.37px;font-size:13.5px;line-height:13.5px;color:#262626;letter-spacing:-1.02px;">14</span>
<span class="t" style="left:135.30px;top:380.37px;font-size:13.5px;line-height:13.5px;color:#000;letter-spacing:0.15px;">Unit Trusts &amp; Investment Funds</span>
<span class="t" style="left:532.90px;top:380.37px;font-size:13.5px;line-height:13.5px;color:#000;letter-spacing:-0.35px;">1,249</span>
<span class="t" style="left:586.15px;top:380.37px;font-size:13.5px;line-height:13.5px;color:#000;letter-spacing:-0.32px;">1,313.6</span>
<span class="t" style="left:650.15px;top:380.37px;font-size:13.5px;line-height:13.5px;color:#000;letter-spacing:-0.32px;">1,378.3</span>
<span class="t" style="left:714.15px;top:380.37px;font-size:13.5px;line-height:13.5px;color:#000;letter-spacing:-0.32px;">1,404.2</span>
<span class="t" style="left:778.15px;top:380.37px;font-size:13.5px;line-height:13.5px;color:#000;letter-spacing:-0.32px;">1,592.1</span>
<span class="t" style="left:842.15px;top:380.37px;font-size:13.5px;line-height:13.5px;color:#000;letter-spacing:-0.32px;">2,045.5</span>
<span class="t" style="left:916.90px;top:380.37px;font-size:13.5px;line-height:13.5px;color:#000;letter-spacing:-0.35px;">2,499</span>
<span class="t" style="left:970.15px;top:380.37px;font-size:13.5px;line-height:13.5px;color:#000;letter-spacing:-0.32px;">2,686.8</span>
<span class="t" style="left:1034.15px;top:380.37px;font-size:13.5px;line-height:13.5px;color:#000;letter-spacing:-0.32px;">2,821.8</span>
<span class="t" style="left:1098.15px;top:380.37px;font-size:13.5px;line-height:13.5px;color:#000;letter-spacing:-0.32px;">3,147.8</span>
<span class="t" style="left:1162.15px;top:380.37px;font-size:13.5px;line-height:13.5px;color:#000;letter-spacing:-0.32px;">3,473.9</span>
<span class="t" style="left:1226.15px;top:380.37px;font-size:13.5px;line-height:13.5px;color:#000;letter-spacing:-0.32px;">3,608.9</span>
<span class="t" style="left:1290.15px;top:380.37px;font-size:13.5px;line-height:13.5px;color:#000;letter-spacing:-0.32px;">3,699.6</span>
<span class="t" style="left:4.85px;top:400.37px;font-size:13.5px;line-height:13.5px;color:#262626;letter-spacing:-1.02px;">15</span>
<span class="t" style="left:108.30px;top:400.37px;font-size:13.5px;line-height:13.5px;color:#000;letter-spacing:0.03px;">Life Insurance</span>
<span class="t" style="left:522.15px;top:400.37px;font-size:13.5px;line-height:13.5px;color:#000;letter-spacing:-0.32px;">9,252.4</span>
<span class="t" style="left:586.15px;top:400.37px;font-size:13.5px;line-height:13.5px;color:#000;letter-spacing:-0.32px;">9,680.5</span>
<span class="t" style="left:643.00px;top:400.37px;font-size:13.5px;line-height:13.5px;color:#000;letter-spacing:-0.33px;">10,174.2</span>
<span class="t" style="left:707.00px;top:400.37px;font-size:13.5px;line-height:13.5px;color:#000;letter-spacing:-0.33px;">10,833.9</span>
<span class="t" style="left:781.75px;top:400.37px;font-size:13.5px;line-height:13.5px;color:#000;letter-spacing:-0.17px;">11,405</span>
<span class="t" style="left:835.00px;top:400.37px;font-size:13.5px;line-height:13.5px;color:#000;letter-spacing:-0.33px;">12,039.2</span>
<span class="t" style="left:899.00px;top:400.37px;font-size:13.5px;line-height:13.5px;color:#000;letter-spacing:-0.33px;">12,726.4</span>
<span class="t" style="left:963.00px;top:400.37px;font-size:13.5px;line-height:13.5px;color:#000;letter-spacing:-0.33px;">13,628.2</span>
<span class="t" style="left:1027.00px;top:400.37px;font-size:13.5px;line-height:13.5px;color:#000;letter-spacing:-0.33px;">14,773.5</span>
<span class="t" style="left:1091.00px;top:400.37px;font-size:13.5px;line-height:13.5px;color:#000;letter-spacing:-0.33px;">15,612.6</span>
<span class="t" style="left:1155.00px;top:400.37px;font-size:13.5px;line-height:13.5px;color:#000;letter-spacing:-0.33px;">16,247.3</span>
<span class="t" style="left:1219.00px;top:400.37px;font-size:13.5px;line-height:13.5px;color:#000;letter-spacing:-0.33px;">16,261.7</span>
<span class="t" style="left:1283.00px;top:400.37px;font-size:13.5px;line-height:13.5px;color:#000;letter-spacing:-0.33px;">17,200.4</span>
<span class="t" style="left:4.85px;top:420.37px;font-size:13.5px;line-height:13.5px;color:#262626;letter-spacing:-1.02px;">16</span>
<span class="t" style="left:108.30px;top:420.37px;font-size:13.5px;line-height:13.5px;color:#000;letter-spacing:-0.04px;">Central Provident Fund (CPF)</span>
<span class="t" style="left:525.75px;top:420.37px;font-size:13.5px;line-height:13.5px;color:#000;letter-spacing:-0.35px;">60,080</span>
<span class="t" style="left:579.00px;top:420.37px;font-size:13.5px;line-height:13.5px;color:#000;letter-spacing:-0.33px;">62,055.2</span>
<span class="t" style="left:643.00px;top:420.37px;font-size:13.5px;line-height:13.5px;color:#000;letter-spacing:-0.33px;">64,259.3</span>
<span class="t" style="left:707.00px;top:420.37px;font-size:13.5px;line-height:13.5px;color:#000;letter-spacing:-0.33px;">66,343.6</span>
<span class="t" style="left:771.00px;top:420.37px;font-size:13.5px;line-height:13.5px;color:#000;letter-spacing:-0.33px;">69,103.4</span>
<span class="t" style="left:835.00px;top:420.37px;font-size:13.5px;line-height:13.5px;color:#000;letter-spacing:-0.33px;">70,517.1</span>
<span class="t" style="left:899.00px;top:420.37px;font-size:13.5px;line-height:13.5px;color:#000;letter-spacing:-0.33px;">70,509.3</span>
<span class="t" style="left:973.75px;top:420.37px;font-size:13.5px;line-height:13.5px;color:#000;letter-spacing:-0.35px;">72,882</span>
<span class="t" style="left:1027.00px;top:420.37px;font-size:13.5px;line-height:13.5px;color:#000;letter-spacing:-0.33px;">75,879.8</span>
<span class="t" style="left:1091.00px;top:420.37px;font-size:13.5px;line-height:13.5px;color:#000;letter-spacing:-0.33px;">76,765.5</span>
<span class="t" style="left:1155.00px;top:420.37px;font-size:13.5px;line-height:13.5px;color:#000;letter-spacing:-0.33px;">78,077.6</span>
<span class="t" style="left:1219.00px;top:420.37px;font-size:13.5px;line-height:13.5px;color:#000;letter-spacing:-0.33px;">79,959.1</span>
<span class="t" style="left:1283.00px;top:420.37px;font-size:13.5px;line-height:13.5px;color:#000;letter-spacing:-0.33px;">82,077.1</span>
<span class="t" style="left:4.85px;top:440.37px;font-size:13.5px;line-height:13.5px;color:#262626;letter-spacing:-1.02px;">17</span>
<span class="t" style="left:108.30px;top:440.37px;font-size:13.5px;line-height:13.5px;color:#000;letter-spacing:-0.03px;">Pension Funds</span>
<span class="t" style="left:532.90px;top:440.37px;font-size:13.5px;line-height:13.5px;color:#000;letter-spacing:-0.35px;">9,610</span>
<span class="t" style="left:586.15px;top:440.37px;font-size:13.5px;line-height:13.5px;color:#000;letter-spacing:-0.32px;">9,888.2</span>
<span class="t" style="left:653.75px;top:440.37px;font-size:13.5px;line-height:13.5px;color:#000;letter-spacing:-0.35px;">10,560</span>
<span class="t" style="left:707.00px;top:440.37px;font-size:13.5px;line-height:13.5px;color:#000;letter-spacing:-0.19px;">11,231.8</span>
<span class="t" style="left:781.75px;top:440.37px;font-size:13.5px;line-height:13.5px;color:#000;letter-spacing:-0.17px;">11,510</span>
<span class="t" style="left:835.00px;top:440.37px;font-size:13.5px;line-height:13.5px;color:#000;letter-spacing:-0.19px;">11,558.4</span>
<span class="t" style="left:899.00px;top:440.37px;font-size:13.5px;line-height:13.5px;color:#000;letter-spacing:-0.19px;">11,675.3</span>
<span class="t" style="left:963.00px;top:440.37px;font-size:13.5px;line-height:13.5px;color:#000;letter-spacing:-0.19px;">11,792.1</span>
<span class="t" style="left:1027.00px;top:440.37px;font-size:13.5px;line-height:13.5px;color:#000;letter-spacing:-0.20px;">11,840.5</span>
<span class="t" style="left:1091.00px;top:440.37px;font-size:13.5px;line-height:13.5px;color:#000;letter-spacing:-0.20px;">11,977.6</span>
<span class="t" style="left:1155.00px;top:440.37px;font-size:13.5px;line-height:13.5px;color:#000;letter-spacing:-0.33px;">12,308.4</span>
<span class="t" style="left:1219.00px;top:440.37px;font-size:13.5px;line-height:13.5px;color:#000;letter-spacing:-0.33px;">12,639.2</span>
<span class="t" style="left:1283.00px;top:440.37px;font-size:13.5px;line-height:13.5px;color:#000;letter-spacing:-0.33px;">12,776.2</span>
<span class="t" style="left:4.85px;top:460.37px;font-size:13.5px;line-height:13.5px;color:#262626;letter-spacing:-1.02px;">18</span>
<span class="t" style="left:81.30px;top:460.37px;font-size:13.5px;line-height:13.5px;color:#000;letter-spacing:0.17px;">Residential Property Assets</span>
<span class="t" style="left:507.85px;top:460.37px;font-size:13.5px;line-height:13.5px;color:#000;letter-spacing:-0.33px;">287,761.5</span>
<span class="t" style="left:571.85px;top:460.37px;font-size:13.5px;line-height:13.5px;color:#000;letter-spacing:-0.33px;">305,289.2</span>
<span class="t" style="left:635.85px;top:460.37px;font-size:13.5px;line-height:13.5px;color:#000;letter-spacing:-0.33px;">312,958.4</span>
<span class="t" style="left:699.85px;top:460.37px;font-size:13.5px;line-height:13.5px;color:#000;letter-spacing:-0.33px;">332,639.2</span>
<span class="t" style="left:763.85px;top:460.37px;font-size:13.5px;line-height:13.5px;color:#000;letter-spacing:-0.33px;">354,823.7</span>
<span class="t" style="left:827.85px;top:460.37px;font-size:13.5px;line-height:13.5px;color:#000;letter-spacing:-0.33px;">387,577.5</span>
<span class="t" style="left:891.85px;top:460.37px;font-size:13.5px;line-height:13.5px;color:#000;letter-spacing:-0.33px;">390,571.3</span>
<span class="t" style="left:955.85px;top:460.37px;font-size:13.5px;line-height:13.5px;color:#000;letter-spacing:-0.33px;">391,945.6</span>
<span class="t" style="left:1030.60px;top:460.37px;font-size:13.5px;line-height:13.5px;color:#000;letter-spacing:-0.36px;">387,573</span>
<span class="t" style="left:1083.85px;top:460.37px;font-size:13.5px;line-height:13.5px;color:#000;letter-spacing:-0.33px;">386,656.6</span>
<span class="t" style="left:1147.85px;top:460.37px;font-size:13.5px;line-height:13.5px;color:#000;letter-spacing:-0.33px;">379,844.8</span>
<span class="t" style="left:1211.85px;top:460.37px;font-size:13.5px;line-height:13.5px;color:#000;letter-spacing:-0.33px;">362,943.6</span>
<span class="t" style="left:1275.85px;top:460.37px;font-size:13.5px;line-height:13.5px;color:#000;letter-spacing:-0.33px;">339,131.4</span>
<span class="t" style="left:1341.00px;top:460.37px;font-size:13.5px;line-height:13.5px;color:#000;">3</span>
<span class="t" style="left:4.85px;top:480.37px;font-size:13.5px;line-height:13.5px;color:#262626;letter-spacing:-1.02px;">19</span>
<span class="t" style="left:108.30px;top:480.37px;font-size:13.5px;line-height:13.5px;color:#000;letter-spacing:0.03px;">Public Housing</span>
<span class="t" style="left:507.85px;top:480.37px;font-size:13.5px;line-height:13.5px;color:#000;letter-spacing:-0.33px;">121,615.1</span>
<span class="t" style="left:571.85px;top:480.37px;font-size:13.5px;line-height:13.5px;color:#000;letter-spacing:-0.33px;">135,742.1</span>
<span class="t" style="left:646.60px;top:480.37px;font-size:13.5px;line-height:13.5px;color:#000;letter-spacing:-0.36px;">143,727</span>
<span class="t" style="left:710.60px;top:480.37px;font-size:13.5px;line-height:13.5px;color:#000;letter-spacing:-0.36px;">156,472</span>
<span class="t" style="left:763.85px;top:480.37px;font-size:13.5px;line-height:13.5px;color:#000;letter-spacing:-0.33px;">173,148.8</span>
<span class="t" style="left:827.85px;top:480.37px;font-size:13.5px;line-height:13.5px;color:#000;letter-spacing:-0.33px;">195,375.3</span>
<span class="t" style="left:891.85px;top:480.37px;font-size:13.5px;line-height:13.5px;color:#000;letter-spacing:-0.33px;">205,623.4</span>
<span class="t" style="left:955.85px;top:480.37px;font-size:13.5px;line-height:13.5px;color:#000;letter-spacing:-0.21px;">211,176.6</span>
<span class="t" style="left:1019.85px;top:480.37px;font-size:13.5px;line-height:13.5px;color:#000;letter-spacing:-0.33px;">212,433.2</span>
<span class="t" style="left:1083.85px;top:480.37px;font-size:13.5px;line-height:13.5px;color:#000;letter-spacing:-0.33px;">210,251.2</span>
<span class="t" style="left:1147.85px;top:480.37px;font-size:13.5px;line-height:13.5px;color:#000;letter-spacing:-0.33px;">209,285.5</span>
<span class="t" style="left:1211.85px;top:480.37px;font-size:13.5px;line-height:13.5px;color:#000;letter-spacing:-0.33px;">196,831.9</span>
<span class="t" style="left:1275.85px;top:480.37px;font-size:13.5px;line-height:13.5px;color:#000;letter-spacing:-0.33px;">186,385.6</span>
<span class="t" style="left:1341.00px;top:480.37px;font-size:13.5px;line-height:13.5px;color:#000;">1</span>
<span class="t" style="left:4.85px;top:500.37px;font-size:13.5px;line-height:13.5px;color:#262626;letter-spacing:-1.02px;">20</span>
<span class="t" style="left:108.30px;top:500.37px;font-size:13.5px;line-height:13.5px;color:#000;letter-spacing:0.10px;">Private Housing</span>
<span class="t" style="left:507.85px;top:500.37px;font-size:13.5px;line-height:13.5px;color:#000;letter-spacing:-0.33px;">166,146.4</span>
<span class="t" style="left:571.85px;top:500.37px;font-size:13.5px;line-height:13.5px;color:#000;letter-spacing:-0.33px;">169,547.1</span>
<span class="t" style="left:635.85px;top:500.37px;font-size:13.5px;line-height:13.5px;color:#000;letter-spacing:-0.33px;">169,231.5</span>
<span class="t" style="left:699.85px;top:500.37px;font-size:13.5px;line-height:13.5px;color:#000;letter-spacing:-0.33px;">176,167.3</span>
<span class="t" style="left:763.85px;top:500.37px;font-size:13.5px;line-height:13.5px;color:#000;letter-spacing:-0.33px;">181,674.8</span>
<span class="t" style="left:827.85px;top:500.37px;font-size:13.5px;line-height:13.5px;color:#000;letter-spacing:-0.33px;">192,202.2</span>
<span class="t" style="left:891.85px;top:500.37px;font-size:13.5px;line-height:13.5px;color:#000;letter-spacing:-0.33px;">184,947.9</span>
<span class="t" style="left:966.60px;top:500.37px;font-size:13.5px;line-height:13.5px;color:#000;letter-spacing:-0.36px;">180,769</span>
<span class="t" style="left:1019.85px;top:500.37px;font-size:13.5px;line-height:13.5px;color:#000;letter-spacing:-0.33px;">175,139.8</span>
<span class="t" style="left:1083.85px;top:500.37px;font-size:13.5px;line-height:13.5px;color:#000;letter-spacing:-0.33px;">176,405.4</span>
<span class="t" style="left:1147.85px;top:500.37px;font-size:13.5px;line-height:13.5px;color:#000;letter-spacing:-0.33px;">170,559.3</span>
<span class="t" style="left:1211.85px;top:500.37px;font-size:13.5px;line-height:13.5px;color:#000;letter-spacing:-0.10px;">166,111.7</span>
<span class="t" style="left:1275.85px;top:500.37px;font-size:13.5px;line-height:13.5px;color:#000;letter-spacing:-0.33px;">152,745.8</span>
<span class="t" style="left:1341.00px;top:500.37px;font-size:13.5px;line-height:13.5px;color:#000;">1</span>
<span class="t" style="left:4.85px;top:520.37px;font-size:13.5px;line-height:13.5px;color:#262626;letter-spacing:-1.02px;">21</span>
<span class="t" style="left:54.30px;top:520.37px;font-size:13.5px;line-height:13.5px;color:#000;letter-spacing:0.39px;">Liabilities</span>
<span class="t" style="left:515.00px;top:520.37px;font-size:13.5px;line-height:13.5px;color:#000;letter-spacing:-0.33px;">63,700.4</span>
<span class="t" style="left:579.00px;top:520.37px;font-size:13.5px;line-height:13.5px;color:#000;letter-spacing:-0.33px;">66,888.1</span>
<span class="t" style="left:643.00px;top:520.37px;font-size:13.5px;line-height:13.5px;color:#000;letter-spacing:-0.33px;">70,405.5</span>
<span class="t" style="left:707.00px;top:520.37px;font-size:13.5px;line-height:13.5px;color:#000;letter-spacing:-0.33px;">74,097.4</span>
<span class="t" style="left:771.00px;top:520.37px;font-size:13.5px;line-height:13.5px;color:#000;letter-spacing:-0.33px;">77,956.2</span>
<span class="t" style="left:835.00px;top:520.37px;font-size:13.5px;line-height:13.5px;color:#000;letter-spacing:-0.33px;">82,264.5</span>
<span class="t" style="left:899.00px;top:520.37px;font-size:13.5px;line-height:13.5px;color:#000;letter-spacing:-0.33px;">85,440.8</span>
<span class="t" style="left:963.00px;top:520.37px;font-size:13.5px;line-height:13.5px;color:#000;letter-spacing:-0.33px;">88,709.6</span>
<span class="t" style="left:1027.00px;top:520.37px;font-size:13.5px;line-height:13.5px;color:#000;letter-spacing:-0.33px;">92,308.5</span>
<span class="t" style="left:1091.00px;top:520.37px;font-size:13.5px;line-height:13.5px;color:#000;letter-spacing:-0.33px;">96,244.6</span>
<span class="t" style="left:1147.85px;top:520.37px;font-size:13.5px;line-height:13.5px;color:#000;letter-spacing:-0.33px;">100,554.5</span>
<span class="t" style="left:1211.85px;top:520.37px;font-size:13.5px;line-height:13.5px;color:#000;letter-spacing:-0.33px;">103,530.9</span>
<span class="t" style="left:1286.60px;top:520.37px;font-size:13.5px;line-height:13.5px;color:#000;letter-spacing:-0.36px;">106,109</span>
<span class="t" style="left:1341.00px;top:520.37px;font-size:13.5px;line-height:13.5px;color:#000;">1</span>
<span class="t" style="left:4.85px;top:540.37px;font-size:13.5px;line-height:13.5px;color:#262626;letter-spacing:-1.02px;">22</span>
<span class="t" style="left:81.30px;top:540.37px;font-size:13.5px;line-height:13.5px;color:#000;letter-spacing:-0.08px;">Mortgage Loans</span>
<span class="t" style="left:515.00px;top:540.37px;font-size:13.5px;line-height:13.5px;color:#000;letter-spacing:-0.33px;">39,775.9</span>
<span class="t" style="left:579.00px;top:540.37px;font-size:13.5px;line-height:13.5px;color:#000;letter-spacing:-0.33px;">41,932.1</span>
<span class="t" style="left:653.75px;top:540.37px;font-size:13.5px;line-height:13.5px;color:#000;letter-spacing:-0.35px;">44,312</span>
<span class="t" style="left:707.00px;top:540.37px;font-size:13.5px;line-height:13.5px;color:#000;letter-spacing:-0.33px;">46,760.2</span>
<span class="t" style="left:771.00px;top:540.37px;font-size:13.5px;line-height:13.5px;color:#000;letter-spacing:-0.33px;">49,605.6</span>
<span class="t" style="left:835.00px;top:540.37px;font-size:13.5px;line-height:13.5px;color:#000;letter-spacing:-0.33px;">52,835.6</span>
<span class="t" style="left:899.00px;top:540.37px;font-size:13.5px;line-height:13.5px;color:#000;letter-spacing:-0.33px;">55,931.2</span>
<span class="t" style="left:963.00px;top:540.37px;font-size:13.5px;line-height:13.5px;color:#000;letter-spacing:-0.33px;">58,316.9</span>
<span class="t" style="left:1027.00px;top:540.37px;font-size:13.5px;line-height:13.5px;color:#000;letter-spacing:-0.33px;">61,051.8</span>
<span class="t" style="left:1091.00px;top:540.37px;font-size:13.5px;line-height:13.5px;color:#000;letter-spacing:-0.33px;">63,751.4</span>
<span class="t" style="left:1155.00px;top:540.37px;font-size:13.5px;line-height:13.5px;color:#000;letter-spacing:-0.33px;">67,146.1</span>
<span class="t" style="left:1219.00px;top:540.37px;font-size:13.5px;line-height:13.5px;color:#000;letter-spacing:-0.33px;">70,251.7</span>
<span class="t" style="left:1293.75px;top:540.37px;font-size:13.5px;line-height:13.5px;color:#000;letter-spacing:-0.35px;">73,483</span>
<span class="t" style="left:4.85px;top:560.37px;font-size:13.5px;line-height:13.5px;color:#262626;letter-spacing:-1.02px;">23</span>
<span class="t" style="left:108.30px;top:560.37px;font-size:13.5px;line-height:13.5px;color:#000;letter-spacing:0.29px;">Financial Institutions</span>
<span class="t" style="left:515.00px;top:560.37px;font-size:13.5px;line-height:13.5px;color:#000;letter-spacing:-0.33px;">22,090.6</span>
<span class="t" style="left:579.00px;top:560.37px;font-size:13.5px;line-height:13.5px;color:#000;letter-spacing:-0.33px;">23,007.6</span>
<span class="t" style="left:643.00px;top:560.37px;font-size:13.5px;line-height:13.5px;color:#000;letter-spacing:-0.33px;">24,148.3</span>
<span class="t" style="left:707.00px;top:560.37px;font-size:13.5px;line-height:13.5px;color:#000;letter-spacing:-0.33px;">25,357.2</span>
<span class="t" style="left:771.00px;top:560.37px;font-size:13.5px;line-height:13.5px;color:#000;letter-spacing:-0.33px;">26,478.8</span>
<span class="t" style="left:845.75px;top:560.37px;font-size:13.5px;line-height:13.5px;color:#000;letter-spacing:-0.35px;">27,985</span>
<span class="t" style="left:899.00px;top:560.37px;font-size:13.5px;line-height:13.5px;color:#000;letter-spacing:-0.33px;">29,356.8</span>
<span class="t" style="left:963.00px;top:560.37px;font-size:13.5px;line-height:13.5px;color:#000;letter-spacing:-0.33px;">30,018.7</span>
<span class="t" style="left:1027.00px;top:560.37px;font-size:13.5px;line-height:13.5px;color:#000;letter-spacing:-0.33px;">30,783.6</span>
<span class="t" style="left:1091.00px;top:560.37px;font-size:13.5px;line-height:13.5px;color:#000;letter-spacing:-0.33px;">31,513.3</span>
<span class="t" style="left:1155.00px;top:560.37px;font-size:13.5px;line-height:13.5px;color:#000;letter-spacing:-0.33px;">32,938.1</span>
<span class="t" style="left:1219.00px;top:560.37px;font-size:13.5px;line-height:13.5px;color:#000;letter-spacing:-0.33px;">34,073.7</span>
<span class="t" style="left:1283.00px;top:560.37px;font-size:13.5px;line-height:13.5px;color:#000;letter-spacing:-0.33px;">34,724.7</span>
<span class="t" style="left:4.85px;top:580.37px;font-size:13.5px;line-height:13.5px;color:#262626;letter-spacing:-1.02px;">24</span>
<span class="t" style="left:108.30px;top:580.37px;font-size:13.5px;line-height:13.5px;color:#000;letter-spacing:0.04px;">Housing &amp; Development Board (HDB)</span>
<span class="t" style="left:515.00px;top:580.37px;font-size:13.5px;line-height:13.5px;color:#000;letter-spacing:-0.33px;">17,685.3</span>
<span class="t" style="left:579.00px;top:580.37px;font-size:13.5px;line-height:13.5px;color:#000;letter-spacing:-0.33px;">18,924.5</span>
<span class="t" style="left:643.00px;top:580.37px;font-size:13.5px;line-height:13.5px;color:#000;letter-spacing:-0.33px;">20,163.8</span>
<span class="t" style="left:717.75px;top:580.37px;font-size:13.5px;line-height:13.5px;color:#000;letter-spacing:-0.35px;">21,403</span>
<span class="t" style="left:771.00px;top:580.37px;font-size:13.5px;line-height:13.5px;color:#000;letter-spacing:-0.33px;">23,126.8</span>
<span class="t" style="left:835.00px;top:580.37px;font-size:13.5px;line-height:13.5px;color:#000;letter-spacing:-0.33px;">24,850.6</span>
<span class="t" style="left:899.00px;top:580.37px;font-size:13.5px;line-height:13.5px;color:#000;letter-spacing:-0.33px;">26,574.4</span>
<span class="t" style="left:963.00px;top:580.37px;font-size:13.5px;line-height:13.5px;color:#000;letter-spacing:-0.33px;">28,298.2</span>
<span class="t" style="left:1027.00px;top:580.37px;font-size:13.5px;line-height:13.5px;color:#000;letter-spacing:-0.33px;">30,268.2</span>
<span class="t" style="left:1091.00px;top:580.37px;font-size:13.5px;line-height:13.5px;color:#000;letter-spacing:-0.33px;">32,238.1</span>
<span class="t" style="left:1155.00px;top:580.37px;font-size:13.5px;line-height:13.5px;color:#000;letter-spacing:-0.33px;">34,208.1</span>
<span class="t" style="left:1229.75px;top:580.37px;font-size:13.5px;line-height:13.5px;color:#000;letter-spacing:-0.35px;">36,178</span>
<span class="t" style="left:1283.00px;top:580.37px;font-size:13.5px;line-height:13.5px;color:#000;letter-spacing:-0.33px;">38,758.3</span>
<span class="t" style="left:4.85px;top:600.37px;font-size:13.5px;line-height:13.5px;color:#262626;letter-spacing:-1.02px;">25</span>
<span class="t" style="left:81.30px;top:600.37px;font-size:13.5px;line-height:13.5px;color:#000;letter-spacing:-0.20px;">Personal Loans</span>
<span class="t" style="left:515.00px;top:600.37px;font-size:13.5px;line-height:13.5px;color:#000;letter-spacing:-0.33px;">23,924.5</span>
<span class="t" style="left:589.75px;top:600.37px;font-size:13.5px;line-height:13.5px;color:#000;letter-spacing:-0.35px;">24,956</span>
<span class="t" style="left:643.00px;top:600.37px;font-size:13.5px;line-height:13.5px;color:#000;letter-spacing:-0.33px;">26,093.5</span>
<span class="t" style="left:707.00px;top:600.37px;font-size:13.5px;line-height:13.5px;color:#000;letter-spacing:-0.33px;">27,337.2</span>
<span class="t" style="left:771.00px;top:600.37px;font-size:13.5px;line-height:13.5px;color:#000;letter-spacing:-0.33px;">28,350.6</span>
<span class="t" style="left:835.00px;top:600.37px;font-size:13.5px;line-height:13.5px;color:#000;letter-spacing:-0.33px;">29,428.9</span>
<span class="t" style="left:899.00px;top:600.37px;font-size:13.5px;line-height:13.5px;color:#000;letter-spacing:-0.33px;">29,509.6</span>
<span class="t" style="left:963.00px;top:600.37px;font-size:13.5px;line-height:13.5px;color:#000;letter-spacing:-0.33px;">30,392.7</span>
<span class="t" style="left:1027.00px;top:600.37px;font-size:13.5px;line-height:13.5px;color:#000;letter-spacing:-0.33px;">31,256.8</span>
<span class="t" style="left:1091.00px;top:600.37px;font-size:13.5px;line-height:13.5px;color:#000;letter-spacing:-0.33px;">32,493.2</span>
<span class="t" style="left:1155.00px;top:600.37px;font-size:13.5px;line-height:13.5px;color:#000;letter-spacing:-0.33px;">33,408.4</span>
<span class="t" style="left:1219.00px;top:600.37px;font-size:13.5px;line-height:13.5px;color:#000;letter-spacing:-0.33px;">33,279.2</span>
<span class="t" style="left:1293.75px;top:600.37px;font-size:13.5px;line-height:13.5px;color:#000;letter-spacing:-0.35px;">32,626</span>
<span class="t" style="left:4.85px;top:620.37px;font-size:13.5px;line-height:13.5px;color:#262626;letter-spacing:-1.02px;">26</span>
<span class="t" style="left:108.30px;top:620.37px;font-size:13.5px;line-height:13.5px;color:#000;letter-spacing:0.40px;">Motor Vehicle</span>
<span class="t" style="left:532.90px;top:620.37px;font-size:13.5px;line-height:13.5px;color:#000;letter-spacing:-0.35px;">8,817</span>
<span class="t" style="left:586.15px;top:620.37px;font-size:13.5px;line-height:13.5px;color:#000;letter-spacing:-0.32px;">9,042.4</span>
<span class="t" style="left:650.15px;top:620.37px;font-size:13.5px;line-height:13.5px;color:#000;letter-spacing:-0.32px;">9,374.7</span>
<span class="t" style="left:724.90px;top:620.37px;font-size:13.5px;line-height:13.5px;color:#000;letter-spacing:-0.35px;">9,600</span>
<span class="t" style="left:771.00px;top:620.37px;font-size:13.5px;line-height:13.5px;color:#000;letter-spacing:-0.33px;">10,070.3</span>
<span class="t" style="left:835.00px;top:620.37px;font-size:13.5px;line-height:13.5px;color:#000;letter-spacing:-0.33px;">10,332.9</span>
<span class="t" style="left:899.00px;top:620.37px;font-size:13.5px;line-height:13.5px;color:#000;letter-spacing:-0.33px;">10,380.2</span>
<span class="t" style="left:963.00px;top:620.37px;font-size:13.5px;line-height:13.5px;color:#000;letter-spacing:-0.33px;">10,688.2</span>
<span class="t" style="left:1027.00px;top:620.37px;font-size:13.5px;line-height:13.5px;color:#000;letter-spacing:-0.20px;">11,103.8</span>
<span class="t" style="left:1091.00px;top:620.37px;font-size:13.5px;line-height:13.5px;color:#000;letter-spacing:-0.20px;">11,395.2</span>
<span class="t" style="left:1155.00px;top:620.37px;font-size:13.5px;line-height:13.5px;color:#000;letter-spacing:-0.20px;">11,623.6</span>
<span class="t" style="left:1219.00px;top:620.37px;font-size:13.5px;line-height:13.5px;color:#000;letter-spacing:-0.20px;">11,581.7</span>
<span class="t" style="left:1283.00px;top:620.37px;font-size:13.5px;line-height:13.5px;color:#000;letter-spacing:-0.20px;">11,471.8</span>
</div>
</body></html>
